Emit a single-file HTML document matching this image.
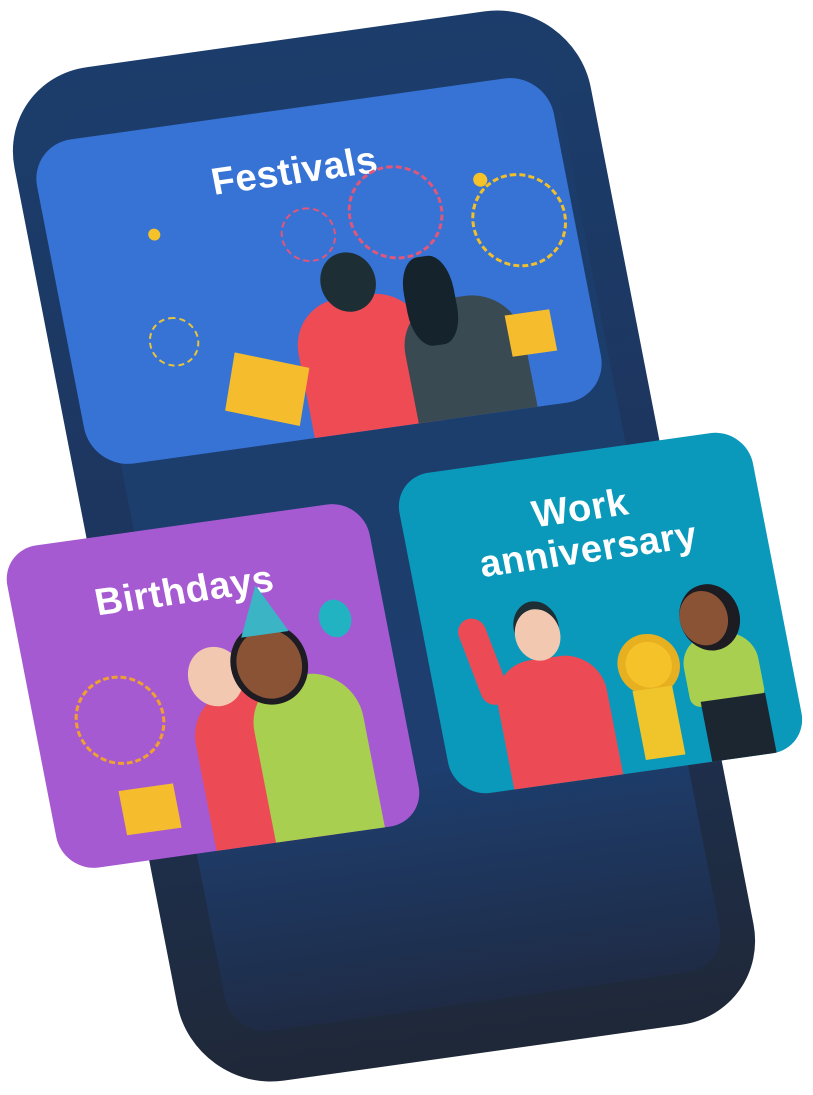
<!DOCTYPE html>
<html><head><style>
html,body{margin:0;padding:0;background:#fff;width:813px;height:1095px;overflow:hidden}
.a{position:absolute;box-sizing:border-box}
.m{transform:matrix(0.99,-0.139,0.191,0.982,0,0)}
.t{position:absolute;left:0;right:0;text-align:center;color:#fff;font-family:"Liberation Sans",sans-serif;font-weight:bold;font-size:38px;line-height:42px;letter-spacing:0.5px}
</style></head><body>
<div class="a m" style="left:93px;top:30px;width:582px;height:1032px;border-radius:90px;background:linear-gradient(180deg,#1c3d6b 0%,#1d355e 50%,#1f2838 100%)"></div>
<div class="a m" style="left:140px;top:70px;width:500px;height:940px;border-radius:40px;background:linear-gradient(180deg,#1c3d6b 0%,#1d3e6e 75%,#1f2b45 100%)"></div>

<div class="a m" style="left:58px;top:106px;width:522px;height:330px;border-radius:42px;background:#3673d5;overflow:hidden">
 <div class="t" style="top:42px;left:-10px">Festivals</div>
 <div class="a" style="left:100px;top:100px;width:12px;height:12px;border-radius:50%;background:#f5c22a"></div>
 <div class="a" style="left:430px;top:90px;width:14px;height:14px;border-radius:50%;background:#f5c22a"></div>
 <div class="a" style="left:230px;top:100px;width:55px;height:55px;border-radius:50%;border:2px dashed #e2567a"></div>
 <div class="a" style="left:300px;top:70px;width:95px;height:95px;border-radius:50%;border:3px dashed #e2567a"></div>
 <div class="a" style="left:420px;top:95px;width:95px;height:95px;border-radius:50%;border:3px dashed #f0c02c"></div>
 <div class="a" style="left:80px;top:190px;width:50px;height:50px;border-radius:50%;border:2px dashed #e8c33c"></div>
 <div class="a" style="left:225px;top:195px;width:130px;height:150px;border-radius:50px 50px 0 0;background:#ef4b55"></div>
 <div class="a" style="left:260px;top:150px;width:55px;height:60px;border-radius:50%;background:#1d2e35"></div>
 <div class="a" style="left:330px;top:210px;width:120px;height:140px;border-radius:50px 50px 0 0;background:#3a4a52"></div>
 <div class="a" style="left:340px;top:165px;width:50px;height:90px;border-radius:40%;background:#15242c"></div>
 <div class="a" style="left:150px;top:245px;width:75px;height:60px;background:#f5bd2d;transform:rotate(20deg)"></div>
 <div class="a" style="left:435px;top:235px;width:45px;height:42px;background:#f5bd2d"></div>
</div>

<div class="a m" style="left:30px;top:522px;width:366px;height:328px;border-radius:36px;background:#a65ad2;overflow:hidden">
 <div class="t" style="top:45px;left:-20px">Birthdays</div>
 <div class="a" style="left:40px;top:140px;width:90px;height:90px;border-radius:50%;border:3px dashed #f0a030"></div>
 <div class="a" style="left:155px;top:170px;width:120px;height:170px;border-radius:50px 50px 0 0;background:#ec4b55"></div>
 <div class="a" style="left:215px;top:165px;width:110px;height:170px;border-radius:50px 50px 0 0;background:#a9cf50"></div>
 <div class="a" style="left:160px;top:125px;width:55px;height:60px;border-radius:50%;background:#f2c9b0"></div>
 <div class="a" style="left:210px;top:115px;width:65px;height:70px;border-radius:50%;background:#8a5335;box-shadow:0 0 0 6px #1c1c22"></div>
 <div class="a" style="left:220px;top:70px;width:0;height:0;border-left:24px solid transparent;border-right:24px solid transparent;border-bottom:50px solid #3bb4c6"></div>
 <div class="a" style="left:300px;top:95px;width:32px;height:38px;border-radius:50%;background:#22b3c2"></div>
 <div class="a" style="left:70px;top:255px;width:55px;height:45px;background:#f5bd2d"></div>
</div>

<div class="a m" style="left:422px;top:450px;width:357px;height:326px;border-radius:36px;background:#0a99bb;overflow:hidden">
 <div class="t" style="top:36px">Work<br>anniversary</div>
 <div class="a" style="left:60px;top:200px;width:110px;height:140px;border-radius:40px 40px 0 0;background:#ec4b55"></div>
 <div class="a" style="left:40px;top:150px;width:28px;height:90px;border-radius:14px;background:#ec4b55;transform:rotate(-10deg)"></div>
 <div class="a" style="left:90px;top:150px;width:45px;height:52px;border-radius:50%;background:#f2c9b0;box-shadow:0 -8px 0 #1d2e35"></div>
 <div class="a" style="left:185px;top:190px;width:62px;height:62px;border-radius:50%;background:#f5c22a;border:8px solid #e6b020"></div>
 <div class="a" style="left:195px;top:245px;width:40px;height:70px;background:#f0c52c"></div>
 <div class="a" style="left:250px;top:200px;width:75px;height:70px;border-radius:30px 30px 10px 10px;background:#a9cf50"></div>
 <div class="a" style="left:255px;top:155px;width:48px;height:55px;border-radius:50%;background:#8a5335;box-shadow:6px 0 0 6px #1c1c22"></div>
 <div class="a" style="left:260px;top:265px;width:65px;height:70px;background:#1c2630"></div>
</div>
</body></html>
